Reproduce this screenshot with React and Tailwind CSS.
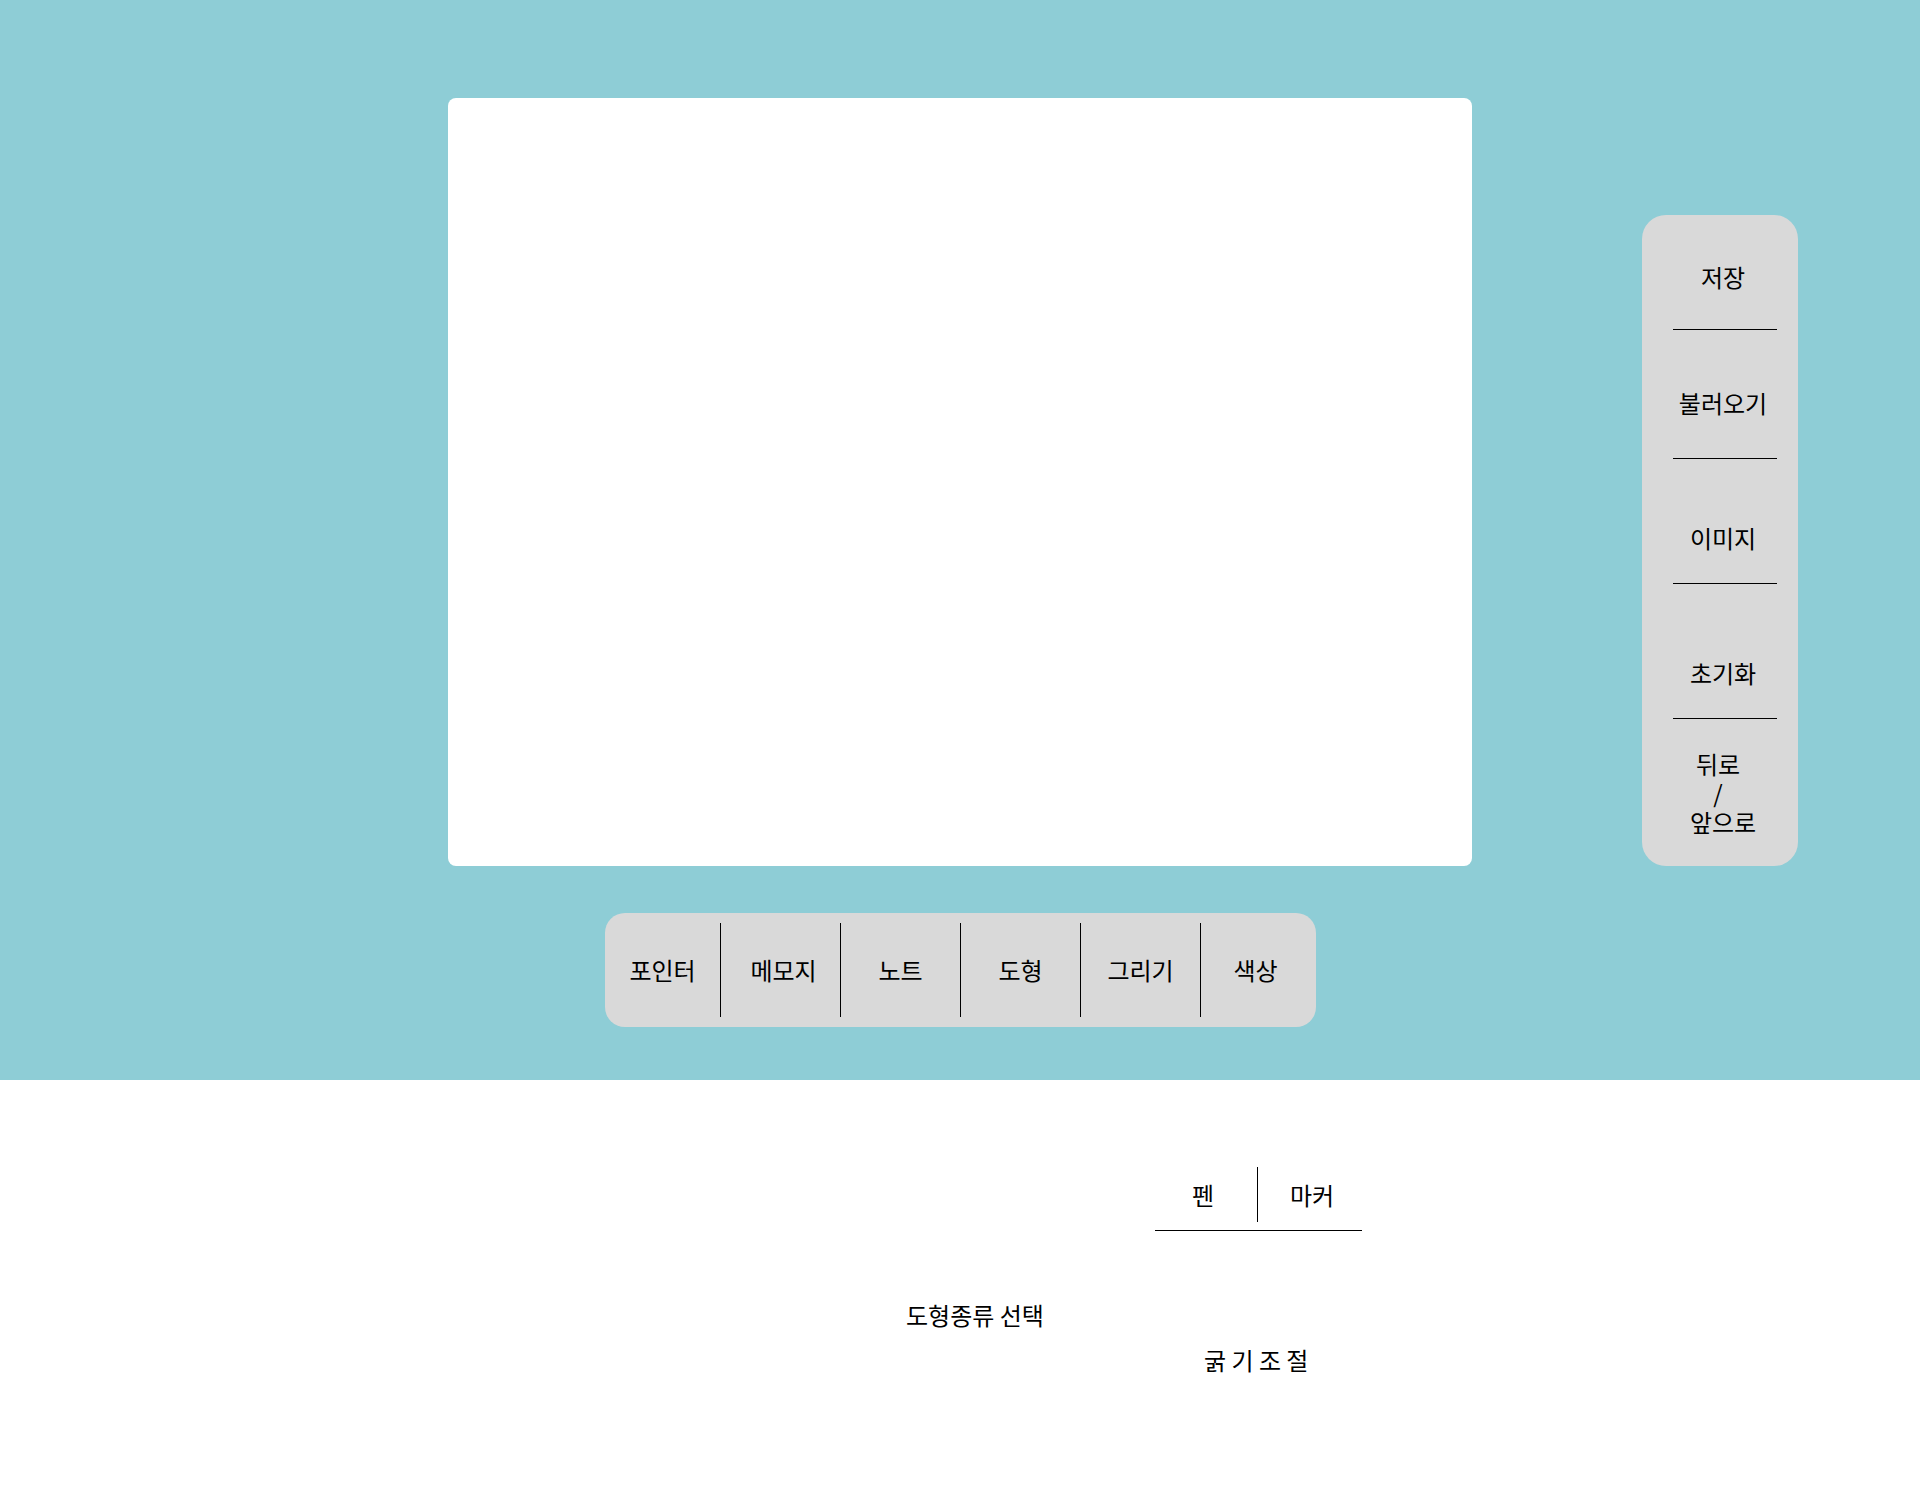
import React from 'react';

const TOOLS = ['포인터', '메모지', '노트', '도형', '그리기', '색상'];
const TOOL_WIDTHS = ['w-[115px]', 'w-[119px] pl-[6px]', 'w-[119px]', 'w-[119px]', 'w-[119px]', 'flex-1 pr-[6px]'];

// right side menu: height of each block and where its text starts
const SIDE = [
  { label: '저장', box: 'h-[114px] pt-[47px]' },
  { label: '불러오기', box: 'h-[128px] pt-[58px]' },
  { label: '이미지', box: 'h-[124px] pt-[64px]' },
  { label: '초기화', box: 'h-[134px] pt-[74px]' },
];

function SideMenu() {
  return (
    <div className="w-[156px] h-[651px] bg-[#d9d9d9] rounded-[24px] flex flex-col">
      {SIDE.map((s) => (
        <React.Fragment key={s.label}>
          <div className={`${s.box} pl-[6px] text-center leading-[30px]`}>{s.label}</div>
          <div className="ml-[31px] w-[104px] h-px bg-black" />
        </React.Fragment>
      ))}
      <div className="pt-[30px] flex flex-col items-center leading-[29px]">
        <span className="pr-[4px]">뒤로</span>
        <span className="pr-[4px]">/</span>
        <span className="pl-[6px]">앞으로</span>
      </div>
    </div>
  );
}

function Toolbar() {
  return (
    <div className="ml-[605px] mt-[47px] w-[711px] h-[114px] bg-[#d9d9d9] rounded-[20px] flex items-center leading-[30px]">
      {TOOLS.map((t, i) => (
        <React.Fragment key={t}>
          {i > 0 && <div className="w-px h-[94px] bg-black" />}
          <div className={`${TOOL_WIDTHS[i]} text-center`}>{t}</div>
        </React.Fragment>
      ))}
    </div>
  );
}

export default function App() {
  return (
    <div className="w-[1920px] h-[1507px] bg-white text-black text-[24px] font-['Noto_Sans_CJK_KR',sans-serif]">
      {/* Board area */}
      <div className="h-[1080px] bg-[#8ecdd6] pt-[98px]">
        <div className="flex items-end pl-[448px] gap-[170px]">
          <div className="w-[1024px] h-[768px] bg-white rounded-lg" />
          <SideMenu />
        </div>
        <Toolbar />
      </div>

      {/* Option panels */}
      <div className="pt-[87px] leading-[30px]">
        <div className="ml-[1155px] w-[207px] border-b border-black pb-[8px]">
          <div className="flex h-[55px] items-center">
            <div className="w-[103px] h-full flex items-center justify-center border-r border-black pr-[6px]">펜</div>
            <div className="flex-1 text-center pl-[4px]">마커</div>
          </div>
        </div>
        <div className="ml-[906px] mt-[69px]">도형종류 선택</div>
        <div className="ml-[1204px] mt-[15px]">굵 기 조 절</div>
      </div>
    </div>
  );
}
